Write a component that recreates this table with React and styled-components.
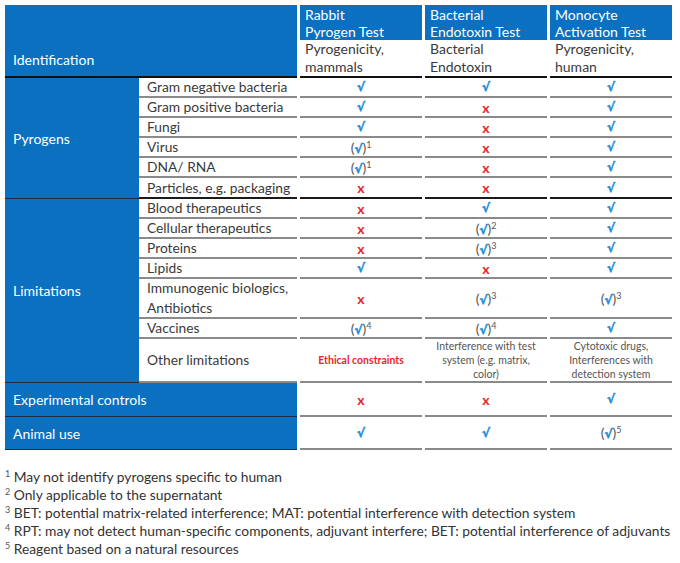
import React from "react";
import styled, { createGlobalStyle } from "styled-components";

//global
const GlobalStyle = createGlobalStyle`
    body {
        margin: 0;
        background: #ffffff;
        font-family: Lato, "Liberation Sans", sans-serif;
    }
`

//styled
const Wrapper = styled.div`
    width: 680px;
    padding: 5px 0 0 5px;
    box-sizing: border-box;
`
const Table = styled.div`
    display: grid;
    grid-template-columns: 134px 158px 125px 125px 125px;
    grid-template-rows: 35px 38px repeat(5, 20px) 21px repeat(4, 20px) 40px 20px 44px 34px 33px;
    font-size: 13.8px;
    color: #3a3a3a;
`
const BlueCell = styled.div`
    grid-column: ${(p) => p.$cols || "auto"};
    grid-row: ${(p) => p.$rows || "auto"};
    background: #0a70bf;
    color: #ffffff;
    display: flex;
    align-items: ${(p) => (p.$bottom ? "flex-end" : "center")};
    padding: 0 8px ${(p) => (p.$bottom ? "8px" : "0")};
    border-bottom: ${(p) => (p.$thick ? "2px solid #111" : "1px solid #1d2a3f")};
    box-sizing: border-box;
    font-size: 14px;
`
const HeadCell = styled.div`
    background: #0a70bf;
    color: #ffffff;
    margin-left: 3px;
    padding: 0 5px;
    display: flex;
    flex-direction: column;
    justify-content: center;
    line-height: 17px;
    font-size: 14px;
`
const SubHeadCell = styled.div`
    margin-left: 3px;
    padding: 0 5px;
    display: flex;
    flex-direction: column;
    justify-content: center;
    line-height: 18px;
    font-size: 14px;
    border-bottom: 2px solid #111;
    box-sizing: border-box;
`
const LabelCell = styled.div`
    display: flex;
    flex-direction: column;
    justify-content: center;
    padding-left: 8px;
    line-height: 20px;
    border-bottom: 2px solid ${(p) => (p.$strong ? "#1a1a1a" : "#8a8a8a")};
    box-sizing: border-box;
    white-space: nowrap;
`
const ValueCell = styled.div`
    margin-left: 3px;
    display: flex;
    flex-direction: column;
    align-items: center;
    justify-content: center;
    text-align: center;
    border-bottom: 2px solid ${(p) => (p.$strong ? "#1a1a1a" : "#8a8a8a")};
    box-sizing: border-box;
`
const Check = styled.span`
    color: #1b8bd4;
    font-weight: bold;
    font-family: "DejaVu Sans", sans-serif;
    font-size: 12px;
    -webkit-text-stroke: 0.5px #1b8bd4;
`
const Cross = styled.span`
    color: #e8262a;
    font-weight: bold;
    font-size: 14px;
`
const Paren = styled.span`
    color: #555;
    font-size: 14px;
`
const Sup = styled.sup`
    font-size: 9px;
    color: #555;
    vertical-align: 5px;
    line-height: 0;
`
const Note = styled.div`
    font-size: 10.5px;
    line-height: 14px;
    color: ${(p) => (p.$red ? "#e8262a" : "#555")};
    font-weight: ${(p) => (p.$red ? "bold" : "normal")};
`
const Footnotes = styled.div`
    margin-top: 18px;
    font-size: 13.8px;
    line-height: 18px;
    color: #333;
`

function Mark({ v }) {
    if (v === "y") return <Check>√</Check>;
    if (v === "x") return <Cross>x</Cross>;
    if (typeof v === "object" && v.p) {
        return (
            <span>
                <Paren>(</Paren>
                <Check>√</Check>
                <Paren>)</Paren>
                <Sup>{v.p}</Sup>
            </span>
        );
    }
    return v;
}

const p = (n) => ({ p: n });

const pyrogens = [
    ["Gram negative bacteria", ["y", "y", "y"]],
    ["Gram positive bacteria", ["y", "x", "y"]],
    ["Fungi", ["y", "x", "y"]],
    ["Virus", [p(1), "x", "y"]],
    ["DNA/ RNA", [p(1), "x", "y"]],
    ["Particles, e.g. packaging", ["x", "x", "y"]],
];

const limitations = [
    ["Blood therapeutics", ["x", "y", "y"]],
    ["Cellular therapeutics", ["x", p(2), "y"]],
    ["Proteins", ["x", p(3), "y"]],
    ["Lipids", ["y", "x", "y"]],
    [["Immunogenic biologics,", "Antibiotics"], ["x", p(3), p(3)]],
    ["Vaccines", [p(4), p(4), "y"]],
    [
        "Other limitations",
        [
            <Note $red>Ethical constraints</Note>,
            <Note>Interference with test<br />system (e.g. matrix,<br />color)</Note>,
            <Note>Cytotoxic drugs,<br />Interferences with<br />detection system</Note>,
        ],
    ],
];

function DataRow({ label, cells, strong, noLabel }) {
    return (
        <>
            {!noLabel && (
                <LabelCell $strong={strong}>
                    {Array.isArray(label) ? label.map((l) => <div key={l}>{l}</div>) : label}
                </LabelCell>
            )}
            {cells.map((c, i) => (
                <ValueCell key={i} $strong={strong}>
                    <Mark v={c} />
                </ValueCell>
            ))}
        </>
    );
}

function App() {
    return (
        <Wrapper>
            <GlobalStyle />
            <Table>
                <BlueCell $cols="1 / 3" $rows="1 / 3" $bottom $thick>Identification</BlueCell>
                <HeadCell><div>Rabbit</div><div>Pyrogen Test</div></HeadCell>
                <HeadCell><div>Bacterial</div><div>Endotoxin Test</div></HeadCell>
                <HeadCell><div>Monocyte</div><div>Activation Test</div></HeadCell>
                <SubHeadCell><div>Pyrogenicity,</div><div>mammals</div></SubHeadCell>
                <SubHeadCell><div>Bacterial</div><div>Endotoxin</div></SubHeadCell>
                <SubHeadCell><div>Pyrogenicity,</div><div>human</div></SubHeadCell>

                <BlueCell $cols="1 / 2" $rows="3 / 9">Pyrogens</BlueCell>
                {pyrogens.map(([l, c], i) => (
                    <DataRow key={"p" + i} label={l} cells={c} strong={i === pyrogens.length - 1} />
                ))}

                <BlueCell $cols="1 / 2" $rows="9 / 16">Limitations</BlueCell>
                {limitations.map(([l, c], i) => (
                    <DataRow key={"l" + i} label={l} cells={c} />
                ))}

                <BlueCell $cols="1 / 3">Experimental controls</BlueCell>
                <DataRow noLabel cells={["x", "x", "y"]} />
                <BlueCell $cols="1 / 3">Animal use</BlueCell>
                <DataRow noLabel cells={["y", "y", p(5)]} />
            </Table>
            <Footnotes>
                <div><Sup>1</Sup> May not identify pyrogens specific to human</div>
                <div><Sup>2</Sup> Only applicable to the supernatant</div>
                <div><Sup>3</Sup> BET: potential matrix-related interference; MAT: potential interference with detection system</div>
                <div><Sup>4</Sup> RPT: may not detect human-specific components, adjuvant interfere; BET: potential interference of adjuvants</div>
                <div><Sup>5</Sup> Reagent based on a natural resources</div>
            </Footnotes>
        </Wrapper>
    );
}

export default App;
